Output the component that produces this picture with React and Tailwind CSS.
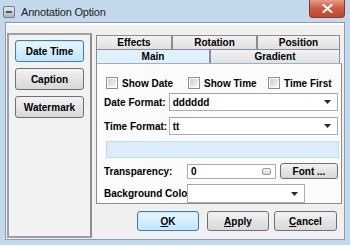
const FONT = { fontFamily: '"Liberation Sans", Arial, sans-serif' }

function WinButton({ children, className = '', primary = false }) {
  return (
    <div
      className={`flex items-center justify-center rounded-[3px] border text-[10px] font-bold text-black ${
        primary
          ? 'border-[#3c7fb1] bg-gradient-to-b from-[#eaf6fd] to-[#bee6fd]'
          : 'border-[#707070] bg-gradient-to-b from-[#f2f2f2] to-[#d8d8d8]'
      } ${className}`}
    >
      {children}
    </div>
  )
}

function Checkbox({ label, className = '' }) {
  return (
    <div className={`flex items-center gap-[4px] ${className}`}>
      <div className="w-[12px] h-[12px] border border-[#8e8f8f] bg-white p-[1px]">
        <div className="w-full h-full bg-gradient-to-br from-[#cbcfd5] to-[#f6f6f6]" />
      </div>
      <span className="text-[10px] font-bold">{label}</span>
    </div>
  )
}

function Arrow() {
  return (
    <svg width="7" height="4" viewBox="0 0 7 4">
      <path d="M0 0 H7 L3.5 4 Z" fill="#1b2a4a" />
    </svg>
  )
}

function Combo({ value, className = '' }) {
  return (
    <div className={`flex items-center justify-between border border-[#abadb3] border-t-[#a3a6ad] bg-white pl-[3px] pr-[6px] ${className}`}>
      <span className="text-[10px] font-bold">{value}</span>
      <Arrow />
    </div>
  )
}

function Tab({ label, className = '', active = false }) {
  return (
    <div
      className={`flex items-center justify-center text-[10px] font-bold border border-[#898c95] border-b-0 ${
        active ? 'bg-[#e1f1fb] border-[#8fb4cf]' : 'bg-gradient-to-b from-[#f2f2f2] to-[#e0e0e0]'
      } ${className}`}
    >
      {label}
    </div>
  )
}

export default function App() {
  return (
    <div className="w-[350px] h-[245px] bg-[#c4d8ec] overflow-hidden flex flex-col text-black" style={FONT}>
      <div className="h-[22px] flex items-start justify-between pl-[3px] pr-[5px]">
        <div className="flex items-center gap-[6px] pt-[4px]">
          <div className="w-[12px] h-[12px] rounded-[2px] border border-[#6f7c8c] bg-gradient-to-b from-[#e3e9f1] to-[#aab6c4] flex items-center justify-center">
            <div className="w-[6px] h-[2px] bg-[#4d5866]" />
          </div>
          <span className="text-[11px] tracking-[-0.2px] text-[#1e1e1e]">Annotation Option</span>
        </div>
        <div className="w-[36px] h-[18px] rounded-b-[4px] border border-t-0 border-[#8a3a2c] bg-gradient-to-b from-[#e49b88] via-[#cf5a42] to-[#c4452c] flex items-center justify-center">
          <svg width="11" height="9" viewBox="0 0 11 9">
            <path d="M1.5 1 L9.5 8 M9.5 1 L1.5 8" stroke="#ffffff" strokeWidth="2.2" strokeLinecap="round" />
          </svg>
        </div>
      </div>

      <div className="mx-[5px] h-[218px] border border-[#8c9cb0] bg-[#f0f0f0] flex flex-col">
        <div className="h-[2px] bg-white" />
        <div className="flex">
          <div className="ml-[1px] mt-[8px] w-[85px] h-[205px] border-2 border-[#a0a0a0] border-r-[#8f8f8f] bg-[#f2f2f2] flex flex-col gap-[6px] pl-[6px] pt-[5px]">
            <WinButton primary className="w-[69px] h-[22px] border-[#3c7fb1] shadow-[inset_0_0_0_1px_#cbe8fb]">Date Time</WinButton>
            <WinButton className="w-[69px] h-[22px]">Caption</WinButton>
            <WinButton className="w-[69px] h-[22px]">Watermark</WinButton>
          </div>

          <div className="ml-[3px] flex flex-col">
            <div className="mt-[10px] ml-[1px] w-[246px] flex flex-col">
              <div className="flex h-[14px]">
                <Tab label="Effects" className="w-[76px]" />
                <Tab label="Rotation" className="w-[85px]" />
                <Tab label="Position" className="w-[83px]" />
              </div>
              <div className="flex h-[14px]">
                <Tab label="Main" active className="w-[114px]" />
                <Tab label="Gradient" className="w-[130px]" />
              </div>
              <div className="h-[141px] w-[246px] border border-[#898c95] border-t-[#8fb4cf] bg-[#fbfbfb] flex flex-col pl-[7px] pr-[3px]">
                <div className="flex mt-[12px] h-[14px]">
                  <Checkbox label="Show Date" className="ml-[2px] w-[82px]" />
                  <Checkbox label="Show Time" className="w-[80px]" />
                  <Checkbox label="Time First" />
                </div>
                <div className="flex items-center mt-[3px] h-[18px]">
                  <span className="w-[65px] text-[10px] font-bold">Date Format:</span>
                  <Combo value="dddddd" className="w-[170px] h-[18px]" />
                </div>
                <div className="flex items-center mt-[6px] h-[18px]">
                  <span className="w-[65px] text-[10px] font-bold">Time Format:</span>
                  <Combo value="tt" className="w-[170px] h-[18px]" />
                </div>
                <div className="mt-[6px] ml-[2px] w-[233px] h-[17px] border border-[#c3dbee] bg-[#dcedf9]" />
                <div className="flex items-center mt-[5px] h-[16px]">
                  <span className="w-[83px] text-[10px] font-bold">Transparency:</span>
                  <div className="w-[89px] h-[15px] border border-[#abadb3] bg-white flex items-center justify-between pl-[3px] pr-[4px]">
                    <span className="text-[10px] font-bold">0</span>
                    <div className="w-[9px] h-[7px] rounded-[2px] border border-[#9a9a9a] bg-gradient-to-b from-[#f4f4f4] to-[#d4d4d4]" />
                  </div>
                  <WinButton className="ml-[4px] w-[58px] h-[16px]">Font ...</WinButton>
                </div>
                <div className="flex items-center mt-[5px] h-[19px]">
                  <span className="w-[83px] text-[10px] font-bold whitespace-nowrap overflow-hidden">Background Color:</span>
                  <Combo value="" className="w-[118px] h-[19px]" />
                </div>
              </div>
            </div>
            <div className="flex mt-[7px] ml-[42px] gap-[8px]">
              <WinButton primary className="w-[62px] h-[20px] shadow-[inset_0_0_0_1px_#cbe8fb]">
                <span className="underline">O</span>K
              </WinButton>
              <WinButton className="w-[62px] h-[20px]">
                <span className="underline">A</span>pply
              </WinButton>
              <WinButton className="w-[63px] h-[20px] ml-[-3px]">
                <span className="underline">C</span>ancel
              </WinButton>
            </div>
          </div>
        </div>
      </div>
    </div>
  )
}
